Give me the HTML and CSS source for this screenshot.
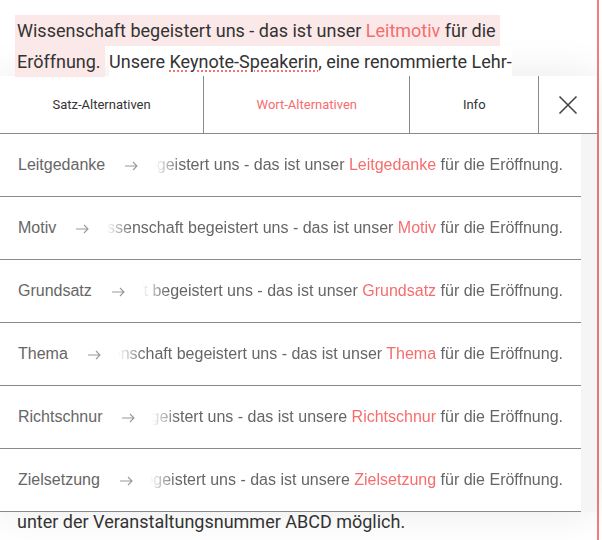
FILE: index.html
```html
<!DOCTYPE html>
<html lang="de">
<head>
    <meta charset="UTF-8">
    <meta name="viewport" content="width=device-width, initial-scale=1.0">
    <title>Wort-Alternativen</title>
    <link rel="stylesheet" href="styles.css">
</head>
<body>
    <div class="page">
        <div class="editor">
            <p class="text">
                <span class="mark">Wissenschaft begeistert uns - das ist unser <span class="word">Leitmotiv</span> für die</span><br>
                <span class="mark">Eröffnung.</span> <span class="rest">Unsere <span class="typo">Keynote-Speakerin</span>, eine renommierte Lehr-</span>
            </p>

            <div class="popup">
                <div class="tabs">
                    <div class="tab">Satz-Alternativen</div>
                    <div class="tab active">Wort-Alternativen</div>
                    <div class="tab">Info</div>
                    <div class="close">
                        <svg width="20" height="20" viewBox="0 0 20 20">
                            <path d="M1.5 1.5 L18.5 18.5 M18.5 1.5 L1.5 18.5" stroke="#444" stroke-width="1.6" fill="none"/>
                        </svg>
                    </div>
                </div>

                <div class="list">
                    <div class="row">
                        <span class="label">Leitgedanke</span>
                        <svg class="arrow" width="13" height="10" viewBox="0 0 13 10"><path d="M0 5 H12 M8 1 L12 5 L8 9" /></svg>
                        <span class="context"><span>Wissenschaft begeistert uns - das ist unser <span class="word">Leitgedanke</span> für die Eröffnung.</span></span>
                    </div>
                    <div class="row">
                        <span class="label">Motiv</span>
                        <svg class="arrow" width="13" height="10" viewBox="0 0 13 10"><path d="M0 5 H12 M8 1 L12 5 L8 9" /></svg>
                        <span class="context"><span>Wissenschaft begeistert uns - das ist unser <span class="word">Motiv</span> für die Eröffnung.</span></span>
                    </div>
                    <div class="row">
                        <span class="label">Grundsatz</span>
                        <svg class="arrow" width="13" height="10" viewBox="0 0 13 10"><path d="M0 5 H12 M8 1 L12 5 L8 9" /></svg>
                        <span class="context"><span>Wissenschaft begeistert uns - das ist unser <span class="word">Grundsatz</span> für die Eröffnung.</span></span>
                    </div>
                    <div class="row">
                        <span class="label">Thema</span>
                        <svg class="arrow" width="13" height="10" viewBox="0 0 13 10"><path d="M0 5 H12 M8 1 L12 5 L8 9" /></svg>
                        <span class="context"><span>Wissenschaft begeistert uns - das ist unser <span class="word">Thema</span> für die Eröffnung.</span></span>
                    </div>
                    <div class="row">
                        <span class="label">Richtschnur</span>
                        <svg class="arrow" width="13" height="10" viewBox="0 0 13 10"><path d="M0 5 H12 M8 1 L12 5 L8 9" /></svg>
                        <span class="context"><span>Wissenschaft begeistert uns - das ist unsere <span class="word">Richtschnur</span> für die Eröffnung.</span></span>
                    </div>
                    <div class="row">
                        <span class="label">Zielsetzung</span>
                        <svg class="arrow" width="13" height="10" viewBox="0 0 13 10"><path d="M0 5 H12 M8 1 L12 5 L8 9" /></svg>
                        <span class="context"><span>Wissenschaft begeistert uns - das ist unsere <span class="word">Zielsetzung</span> für die Eröffnung.</span></span>
                    </div>
                </div>
            </div>

            <p class="text last">unter der Veranstaltungsnummer ABCD möglich.</p>
        </div>
    </div>
</body>
</html>
```

FILE: styles.css
```css
body {
    margin: 0;
    background: #fff;
    font-family: Roboto, "Liberation Sans", sans-serif;
}
.page {
    display: flex;
    height: 540px;
    overflow: hidden;
}
.editor {
    width: 597px;
    border-right: 2px solid #f47c7c;
    background: #fff;
}
.text {
    margin: 0;
    padding: 16px 17px 0;
    font-size: 18px;
    line-height: 30.6px;
    color: #333;
}
.text.last {
    padding-top: 0;
    margin-top: -5px;
}
.mark {
    background: #fbe8e8;
    padding: 5px 4px 5px 2px;
    margin-left: -2px;
    -webkit-box-decoration-break: clone;
    box-decoration-break: clone;
}
.rest {
    background: #fff;
    padding: 5px 0;
}
.word {
    color: #f66d6d;
}
.typo {
    text-decoration: underline dotted #f26363;
    text-underline-offset: 3px;
}
.popup {
    margin-top: -1px;
    background: #f5f5f5;
    box-shadow: 0 0 40px rgba(0, 0, 0, 0.09);
}
.tabs {
    display: flex;
    height: 57px;
    background: #fff;
    border-bottom: 1px solid #8a8a8a;
}
.tab {
    flex: 1 1 auto;
    display: flex;
    align-items: center;
    justify-content: center;
    border-right: 1px solid #8a8a8a;
    font-size: 13px;
    color: #333;
}
.tab.active {
    color: #f66d6d;
}
.close {
    width: 58px;
    display: flex;
    align-items: center;
    justify-content: center;
}
.list {
    width: 581px;
    background: #fff;
}
.row {
    display: flex;
    align-items: center;
    height: 62px;
    padding: 0 18px;
    border-bottom: 1px solid #8a8a8a;
    font-family: "Liberation Sans", Arial, sans-serif;
    font-size: 16px;
    color: #666;
    white-space: nowrap;
}
.arrow {
    flex: none;
    margin: 1px 17px 0 20px;
    fill: none;
    stroke: #999;
    stroke-width: 1.1;
}
.context {
    flex: 1;
    min-width: 0;
    display: flex;
    justify-content: flex-end;
    overflow: hidden;
    -webkit-mask-image: linear-gradient(to right, transparent 0, #000 26px);
    mask-image: linear-gradient(to right, transparent 0, #000 26px);
}
```
